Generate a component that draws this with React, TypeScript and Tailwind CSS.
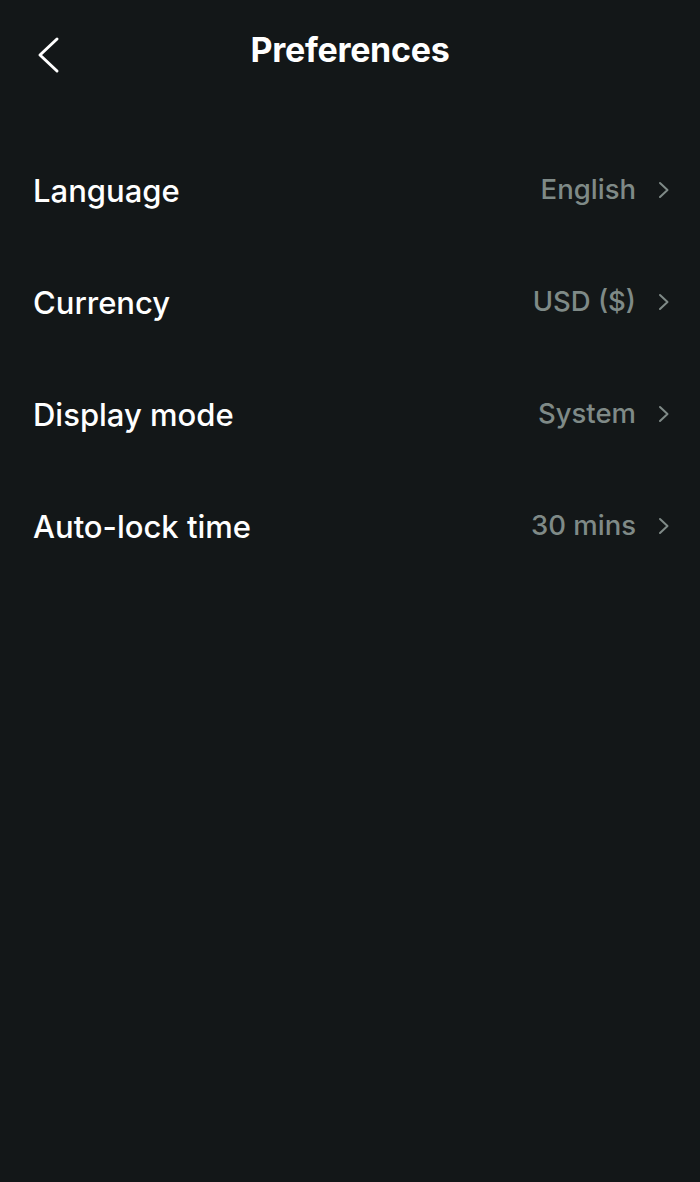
import React from "react";

const rows = [
  { label: "Language", value: "English" },
  { label: "Currency", value: "USD ($)" },
  { label: "Display mode", value: "System" },
  { label: "Auto-lock time", value: "30 mins" },
];

export default function App() {
  return (
    <div
      className="w-[700px] h-[1182px] bg-[#131718] text-white"
      style={{ fontFamily: "Inter, 'Noto Sans', sans-serif" }}
    >
      <div className="relative h-[100px] flex items-center justify-center">
        <button className="absolute left-[36px] top-[36px] w-[24px] h-[38px] flex items-center justify-center">
          <svg width="24" height="38" viewBox="0 0 24 38" fill="none">
            <path d="M21 3 L4 19 L21 35" stroke="white" strokeWidth="3" strokeLinecap="round" strokeLinejoin="round" />
          </svg>
        </button>
        <h1 className="text-[34px] font-bold tracking-[-0.3px] leading-none">Preferences</h1>
      </div>
      <div className="pt-[34px] flex flex-col">
        {rows.map((r) => (
          <div key={r.label} className="h-[112px] flex items-center justify-between pl-[33px] pr-[30px]">
            <span className="text-[31px] font-medium leading-none">{r.label}</span>
            <div className="flex items-center gap-[22px]">
              <span className="text-[27.5px] font-medium text-[#7f8a87] leading-none">{r.value}</span>
              <svg width="12" height="18" viewBox="0 0 12 18" fill="none">
                <path d="M2 2 L9.5 9 L2 16" stroke="#7f8a87" strokeWidth="2" strokeLinecap="round" strokeLinejoin="round" />
              </svg>
            </div>
          </div>
        ))}
      </div>
    </div>
  );
}
